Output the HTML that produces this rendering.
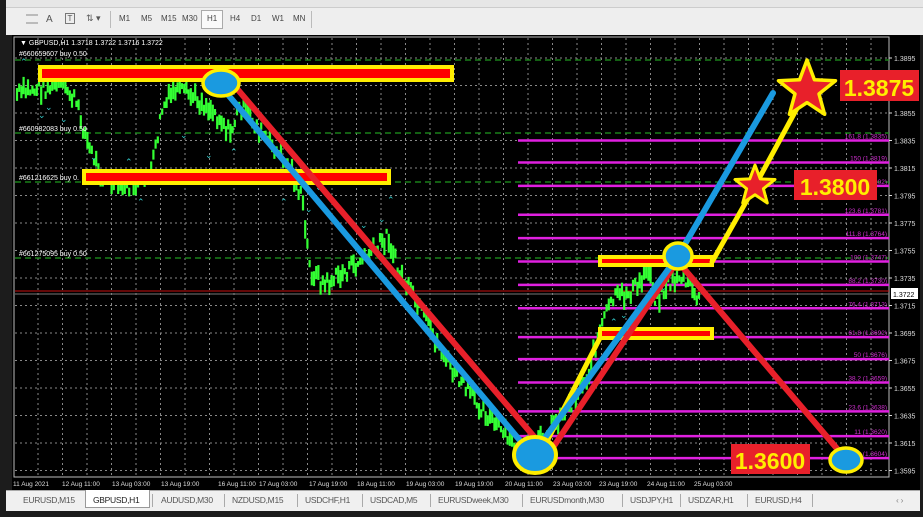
<!DOCTYPE html>
<html><head><meta charset="utf-8"><style>
*{margin:0;padding:0;box-sizing:border-box}
body{width:923px;height:517px;background:#1c1c1c;overflow:hidden;font-family:"Liberation Sans",sans-serif;position:relative}
#tb{position:absolute;left:6px;top:0;width:917px;height:35px;background:#eeeeee}
#tb .r1{position:absolute;top:0;left:0;width:100%;height:8px;background:#e6e6e6;border-bottom:1px solid #ccc}
.tf{position:absolute;top:14px;font-size:8px;color:#444}
#tabs{position:absolute;left:6px;top:490px;width:914px;height:21px;background:#f0f0f0;border-top:1px solid #aaa}
.tab{position:absolute;top:4px;font-size:8.5px;color:#555;letter-spacing:-.3px;white-space:nowrap}
.sep{position:absolute;top:3px;width:1px;height:13px;background:#aaa}
</style></head><body>
<div id="tb"><div class="r1"></div>
<div style="position:absolute;left:20px;top:14px;width:12px;height:10px;border-top:2px solid #bbb;border-bottom:2px solid #bbb"></div>
<div style="position:absolute;left:40px;top:14px;font-size:10px;color:#555">A</div>
<div style="position:absolute;left:59px;top:13px;width:10px;height:11px;border:1px solid #777;font-size:8px;text-align:center;color:#555">T</div>
<div style="position:absolute;left:80px;top:13px;font-size:9px;color:#555">⇅ ▾</div>
<div style="position:absolute;left:104px;top:11px;width:1px;height:17px;background:#bbb"></div>
<span class="tf" style="left:113px">M1</span><span class="tf" style="left:135px">M5</span><span class="tf" style="left:155px">M15</span><span class="tf" style="left:176px">M30</span>
<div style="position:absolute;left:195px;top:10px;width:22px;height:19px;border:1px solid #aaa;background:#fafafa"></div>
<span class="tf" style="left:201px">H1</span><span class="tf" style="left:224px">H4</span><span class="tf" style="left:245px">D1</span><span class="tf" style="left:266px">W1</span><span class="tf" style="left:287px">MN</span>
<div style="position:absolute;left:305px;top:11px;width:1px;height:17px;background:#bbb"></div>
</div>
<svg style="position:absolute;left:0;top:0" width="923" height="517" id="s">
<rect x="12" y="35" width="908" height="455" fill="#000"/>
<rect x="14" y="37" width="875" height="440" fill="none" stroke="#bbb" stroke-width="1"/>
<g id="grid" stroke="#aaa" stroke-width="1" stroke-dasharray="2,3" opacity=".8"></g>
<g stroke="#1f9a1f" stroke-width="1.2" stroke-dasharray="6,4" fill="none">
<line x1="15" y1="60" x2="889" y2="60"/><line x1="15" y1="133" x2="889" y2="133"/><line x1="15" y1="182" x2="889" y2="182"/><line x1="15" y1="258" x2="889" y2="258"/>
</g>
<line x1="15" y1="291" x2="889" y2="291" stroke="#c81010" stroke-width="1"/>
<line x1="15" y1="294" x2="889" y2="294" stroke="#777" stroke-width="1"/>
<g id="fib" stroke="#e020e0" stroke-width="2.5"></g>
<g id="candles" stroke="#33ff33" stroke-width="2.2"></g>
<g id="arr" fill="#3cc" font-size="9"></g>
<g font-size="7" fill="#fff">
<text x="20" y="45">▼ GBPUSD,H1  1.3718 1.3722 1.3716 1.3722</text>
<text x="19" y="56">#660659607 buy 0.50</text>
<text x="19" y="131">#660982083 buy 0.50</text>
<text x="19" y="180">#661216625 buy 0.</text>
<text x="19" y="256">#661275095 buy 0.50</text>
</g>
<g id="axis" font-size="7" fill="#ddd"></g>
<rect x="891" y="288" width="27" height="11" fill="#fff"/><text x="893" y="297" font-size="7" fill="#000">1.3722</text>
<g id="time" font-size="7" fill="#ddd"></g>
<g stroke-linecap="round">
<rect x="40" y="67" width="412" height="13" fill="#ff0000" stroke="#ffee00" stroke-width="4"/>
<rect x="84" y="171" width="305" height="12" fill="#ff0000" stroke="#ffee00" stroke-width="4"/>
<line x1="233" y1="84" x2="548" y2="453" stroke="#e8202a" stroke-width="6"/>
<line x1="224" y1="90" x2="528" y2="450" stroke="#1a9ae0" stroke-width="6"/>
<line x1="540" y1="455" x2="602" y2="334" stroke="#ffee00" stroke-width="5"/>
<rect x="600" y="329" width="112" height="9" fill="#ff0000" stroke="#ffee00" stroke-width="4"/>
<line x1="548" y1="455" x2="678" y2="260" stroke="#e8202a" stroke-width="6"/>
<line x1="536" y1="450" x2="678" y2="256" stroke="#1a9ae0" stroke-width="6"/>
<rect x="600" y="257" width="112" height="8" fill="#ff0000" stroke="#ffee00" stroke-width="4"/>
<line x1="678" y1="256" x2="773" y2="93" stroke="#1a9ae0" stroke-width="6"/>
<polyline points="712,262 755,186 808,88" fill="none" stroke="#ffee00" stroke-width="5"/>
<line x1="680" y1="264" x2="845" y2="458" stroke="#e8202a" stroke-width="6"/>
<ellipse cx="221" cy="83" rx="18" ry="13" fill="#1a9ae0" stroke="#ffee00" stroke-width="3.5"/>
<ellipse cx="535" cy="455" rx="21" ry="18" fill="#1a9ae0" stroke="#ffee00" stroke-width="4"/>
<ellipse cx="678" cy="256" rx="14" ry="13" fill="#1a9ae0" stroke="#ffee00" stroke-width="3.5"/>
<ellipse cx="846" cy="460" rx="16" ry="12" fill="#1a9ae0" stroke="#ffee00" stroke-width="3.5"/>
</g>
<polygon id="st1" fill="#e8202a" stroke="#ffee00" stroke-width="3.5" stroke-linejoin="round"/>
<polygon id="st2" fill="#e8202a" stroke="#ffee00" stroke-width="3" stroke-linejoin="round"/>
<rect x="840" y="70" width="79" height="31" fill="#e8202a"/>
<text x="879" y="96" font-size="23" font-weight="bold" fill="#ffee00" text-anchor="middle">1.3875</text>
<rect x="794" y="170" width="83" height="30" fill="#e8202a"/>
<text x="835" y="195" font-size="23" font-weight="bold" fill="#ffee00" text-anchor="middle">1.3800</text>
<rect x="731" y="444" width="79" height="30" fill="#e8202a"/>
<text x="770" y="469" font-size="23" font-weight="bold" fill="#ffee00" text-anchor="middle">1.3600</text>
</svg>
<div id="tabs"></div>
<script>
var NS="http://www.w3.org/2000/svg";
function el(p,t,a,txt){var e=document.createElementNS(NS,t);for(var k in a)e.setAttribute(k,a[k]);if(txt)e.textContent=txt;document.getElementById(p).appendChild(e);return e;}
function Y(p){return 58+(1.3895-p)*13750;}
for(var p=1.3895;p>1.359;p-=0.002){var y=Y(p);el('grid','line',{x1:15,y1:y,x2:889,y2:y});el('axis','text',{x:894,y:y+3},p.toFixed(4));el('axis','line',{x1:889,y1:y,x2:892,y2:y,stroke:'#ddd'});}
for(var x=38;x<889;x+=24.5)el('grid','line',{x1:x,y1:38,x2:x,y2:476});
var fib=[["161.8","1.3835"],["150","1.3819"],["138.2","1.3802"],["123.6","1.3781"],["111.8","1.3764"],["100","1.3747"],["88.2","1.3730"],["76.4","1.3713"],["61.8","1.3692"],["50","1.3676"],["38.2","1.3659"],["23.6","1.3638"],["11","1.3620"],["0","1.3604"]];
fib.forEach(function(f){var y=Y(+f[1]);el('fib','line',{x1:518,y1:y,x2:889,y2:y});el('axis','text',{x:887,y:y-2,'text-anchor':'end',fill:'#d030d0','font-size':6.5},f[0]+" ("+f[1]+")");});
var tl=["11 Aug 2021","12 Aug 11:00","13 Aug 03:00","13 Aug 19:00","16 Aug 11:00","17 Aug 03:00","17 Aug 19:00","18 Aug 11:00","19 Aug 03:00","19 Aug 19:00","20 Aug 11:00","23 Aug 03:00","23 Aug 19:00","24 Aug 11:00","25 Aug 03:00"];
var tx=[13,62,112,161,218,259,309,357,406,455,505,553,599,647,694];
tl.forEach(function(t,i){el('time','text',{x:tx[i],y:486,'font-size':6.5},t);});
var pts=[[16,95],[30,90],[45,88],[62,85],[75,100],[90,150],[105,180],[120,188],[140,183],[152,170],[162,110],[175,90],[195,98],[210,108],[222,120],[230,135],[240,105],[255,125],[275,150],[292,170],[302,200],[310,270],[325,285],[345,272],[360,262],[375,250],[388,235],[398,270],[412,295],[430,330],[455,375],[480,405],[500,430],[518,450],[535,447],[552,425],[570,405],[588,375],[600,330],[612,300],[625,295],[640,285],[648,265],[656,300],[668,285],[680,275],[692,290],[700,300]];
var seed=7;function r(){seed=(seed*9301+49297)%233280;return seed/233280;}
for(var x=17;x<700;x+=2.2){var i=0;while(i<pts.length-2&&pts[i+1][0]<x)i++;var a=pts[i],b=pts[i+1];var t=Math.min(1,Math.max(0,(x-a[0])/(b[0]-a[0])));var y=a[1]+(b[1]-a[1])*t+(r()-.5)*16;var h=5+r()*14;el('candles','line',{x1:x,y1:y-h/2,x2:x,y2:y+h/2});}
[[20,65],[45,110],[38,118],[60,122],[90,160],[115,183],[125,165],[137,205],[180,138],[205,158],[210,172],[230,155],[255,118],[258,145],[280,205],[305,212],[315,190],[387,203],[378,222],[340,235],[360,228],[610,325],[660,290],[620,318]].forEach(function(q){el('arr','text',{x:q[0],y:q[1]},q[1]%2?'⌃':'⌄');});
function star(id,cx,cy,R){var s=[];for(var k=0;k<10;k++){var rr=k%2?R*0.42:R,an=-Math.PI/2+k*Math.PI/5;s.push((cx+rr*Math.cos(an)).toFixed(1)+","+(cy+rr*Math.sin(an)).toFixed(1));}document.getElementById(id).setAttribute('points',s.join(' '));}
star('st1',807,90,30);star('st2',755,186,21);
var tabs=["EURUSD,M15","GBPUSD,H1","AUDUSD,M30","NZDUSD,M15","USDCHF,H1","USDCAD,M5","EURUSDweek,M30","EURUSDmonth,M30","USDJPY,H1","USDZAR,H1","EURUSD,H4"];
var tp=[17,87,155,226,299,364,432,524,624,682,749];
var sp=[0,0,146,218,291,356,424,516,616,674,741,806];
var h="";tabs.forEach(function(t,i){if(i==1)h+='<div style="position:absolute;left:79px;top:-1px;width:65px;height:18px;background:#fff;border:1px solid #999;border-top:none"></div>';h+='<span class="tab" style="left:'+tp[i]+'px;'+(i==1?'color:#222':'')+'">'+t+'</span>';});
sp.forEach(function(s){if(s)h+='<div class="sep" style="left:'+s+'px"></div>';});
h+='<span class="tab" style="left:890px;color:#888">‹ ›</span>';
document.getElementById('tabs').innerHTML=h;
</script>
</body></html>
